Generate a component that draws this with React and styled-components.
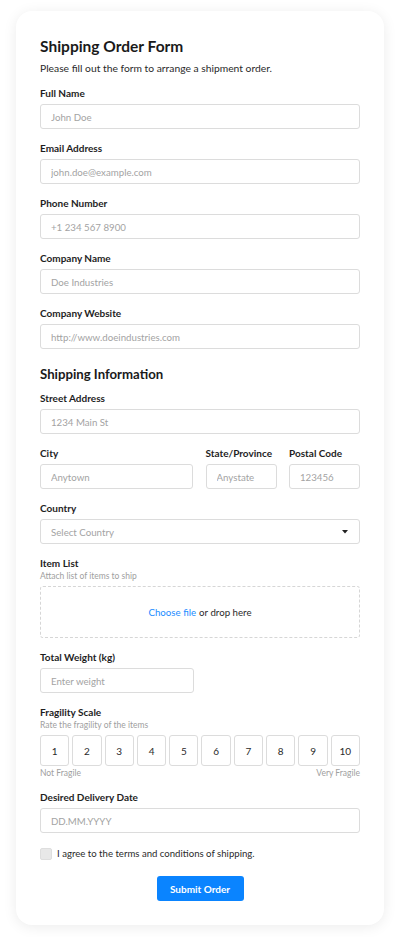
import React from 'react';
import styled, { createGlobalStyle } from 'styled-components';

const GlobalStyle = createGlobalStyle`
  * {
    box-sizing: border-box;
  }

  body {
    margin: 0;
    background: #fff;
    font-family: Lato, 'Open Sans', sans-serif;
    color: #222;
  }
`;

const Page = styled.div`
  padding: 11px 16px 12px;
`;

const Card = styled.div`
  background: #fff;
  border-radius: 16px;
  box-shadow: 0 2px 14px rgba(0, 0, 0, 0.08);
  padding: 24px 24px 24px;
`;

const Title = styled.h1`
  margin: 0;
  font-size: 15.5px;
  line-height: 22px;
  font-weight: 700;
  color: #1a1a1a;
`;

const Subtitle = styled.p`
  margin: 4px 0 0;
  font-size: 10.3px;
  line-height: 14px;
  color: #2a2a2a;
`;

const Form = styled.form`
  display: flex;
  flex-direction: column;
  gap: 12px;
  margin-top: 11px;
`;

const SectionTitle = styled.h2`
  margin: 4px 0 -4px;
  font-size: 13.2px;
  line-height: 18px;
  font-weight: 700;
  color: #1a1a1a;
`;

const Field = styled.div`
  display: flex;
  flex-direction: column;
  width: ${(p) => (p.$half ? 'calc(50% - 6.5px)' : 'auto')};
`;

const Label = styled.label`
  font-size: 10px;
  line-height: 14px;
  font-weight: 700;
  color: #1e1e1e;
  white-space: nowrap;
`;

const Help = styled.span`
  font-size: 8.5px;
  line-height: 12px;
  color: #a0a0a0;
`;

const Input = styled.input`
  margin-top: 4px;
  width: 100%;
  height: 25px;
  padding: 0 10px;
  border: 1px solid #dcdcdc;
  border-radius: 3px;
  font-family: inherit;
  font-size: 9.7px;
  color: #333;
  outline: none;

  &::placeholder {
    color: #a3a3a3;
  }
`;

const Row = styled.div`
  display: grid;
  grid-template-columns: 1fr 71px 71px;
  column-gap: 12.5px;
`;

const SelectWrap = styled.div`
  position: relative;
  margin-top: 4px;
`;

const Select = styled.select`
  appearance: none;
  width: 100%;
  height: 25px;
  padding: 0 10px;
  border: 1px solid #dcdcdc;
  border-radius: 3px;
  background: #fff;
  font-family: inherit;
  font-size: 9.7px;
  color: #a3a3a3;
  outline: none;
`;

const Caret = styled.svg`
  position: absolute;
  right: 12px;
  top: 11px;
  pointer-events: none;
`;

const DropZone = styled.div`
  margin-top: 4px;
  height: 52px;
  border: 1px dashed #d6d6d6;
  border-radius: 3px;
  display: flex;
  align-items: center;
  justify-content: center;
  font-size: 9.7px;
  color: #2a2a2a;
`;

const FileLink = styled.span`
  color: #1a8cff;
  margin-right: 3px;
`;

const Scale = styled.div`
  margin-top: 4px;
  display: grid;
  grid-template-columns: repeat(10, 1fr);
  gap: 3px;
`;

const ScaleButton = styled.button`
  height: 31px;
  border: 1px solid #dcdcdc;
  border-radius: 3px;
  background: #fff;
  font-family: inherit;
  font-size: 10px;
  color: #2a2a2a;
  padding: 0;
`;

const ScaleLegend = styled.div`
  margin-top: 2px;
  display: flex;
  justify-content: space-between;
  font-size: 8.5px;
  line-height: 10px;
  color: #a0a0a0;
`;

const CheckRow = styled.label`
  display: flex;
  align-items: center;
  gap: 5px;
  height: 17px;
  font-size: 9.6px;
  color: #2a2a2a;
`;

const Checkbox = styled.input`
  appearance: none;
  margin: 0;
  width: 12px;
  height: 12px;
  border: 1px solid #dedede;
  border-radius: 2px;
  background: #e8e8e8;
`;

const SubmitButton = styled.button`
  align-self: center;
  margin-top: 2px;
  width: 87px;
  height: 25px;
  border: none;
  border-radius: 3px;
  background: #0a84ff;
  color: #fff;
  font-family: inherit;
  font-size: 10px;
  font-weight: 700;
`;

const TextField = ({ label, placeholder, half }) => (
  <Field $half={half}>
    <Label>{label}</Label>
    <Input placeholder={placeholder} />
  </Field>
);

const App = () => {
  return (
    <Page>
      <GlobalStyle />
      <Card>
        <Title>Shipping Order Form</Title>
        <Subtitle>Please fill out the form to arrange a shipment order.</Subtitle>

        <Form onSubmit={(e) => e.preventDefault()}>
          <TextField label="Full Name" placeholder="John Doe" />
          <TextField label="Email Address" placeholder="john.doe@example.com" />
          <TextField label="Phone Number" placeholder="+1 234 567 8900" />
          <TextField label="Company Name" placeholder="Doe Industries" />
          <TextField label="Company Website" placeholder="http://www.doeindustries.com" />

          <SectionTitle>Shipping Information</SectionTitle>
          <TextField label="Street Address" placeholder="1234 Main St" />

          <Row>
            <TextField label="City" placeholder="Anytown" />
            <TextField label="State/Province" placeholder="Anystate" />
            <TextField label="Postal Code" placeholder="123456" />
          </Row>

          <Field>
            <Label>Country</Label>
            <SelectWrap>
              <Select defaultValue="">
                <option value="" disabled>
                  Select Country
                </option>
                <option>United States</option>
                <option>Canada</option>
              </Select>
              <Caret width="6" height="4" viewBox="0 0 6 4">
                <path d="M0 0h6L3 3.5z" fill="#222" />
              </Caret>
            </SelectWrap>
          </Field>

          <Field>
            <Label>Item List</Label>
            <Help>Attach list of items to ship</Help>
            <DropZone>
              <FileLink>Choose file</FileLink> or drop here
            </DropZone>
          </Field>

          <TextField label="Total Weight (kg)" placeholder="Enter weight" half />

          <Field>
            <Label>Fragility Scale</Label>
            <Help>Rate the fragility of the items</Help>
            <Scale>
              {[1, 2, 3, 4, 5, 6, 7, 8, 9, 10].map((n) => (
                <ScaleButton type="button" key={n}>
                  {n}
                </ScaleButton>
              ))}
            </Scale>
            <ScaleLegend>
              <span>Not Fragile</span>
              <span>Very Fragile</span>
            </ScaleLegend>
          </Field>

          <TextField label="Desired Delivery Date" placeholder="DD.MM.YYYY" />

          <CheckRow>
            <Checkbox type="checkbox" />
            I agree to the terms and conditions of shipping.
          </CheckRow>

          <SubmitButton type="submit">Submit Order</SubmitButton>
        </Form>
      </Card>
    </Page>
  );
};

export default App;
